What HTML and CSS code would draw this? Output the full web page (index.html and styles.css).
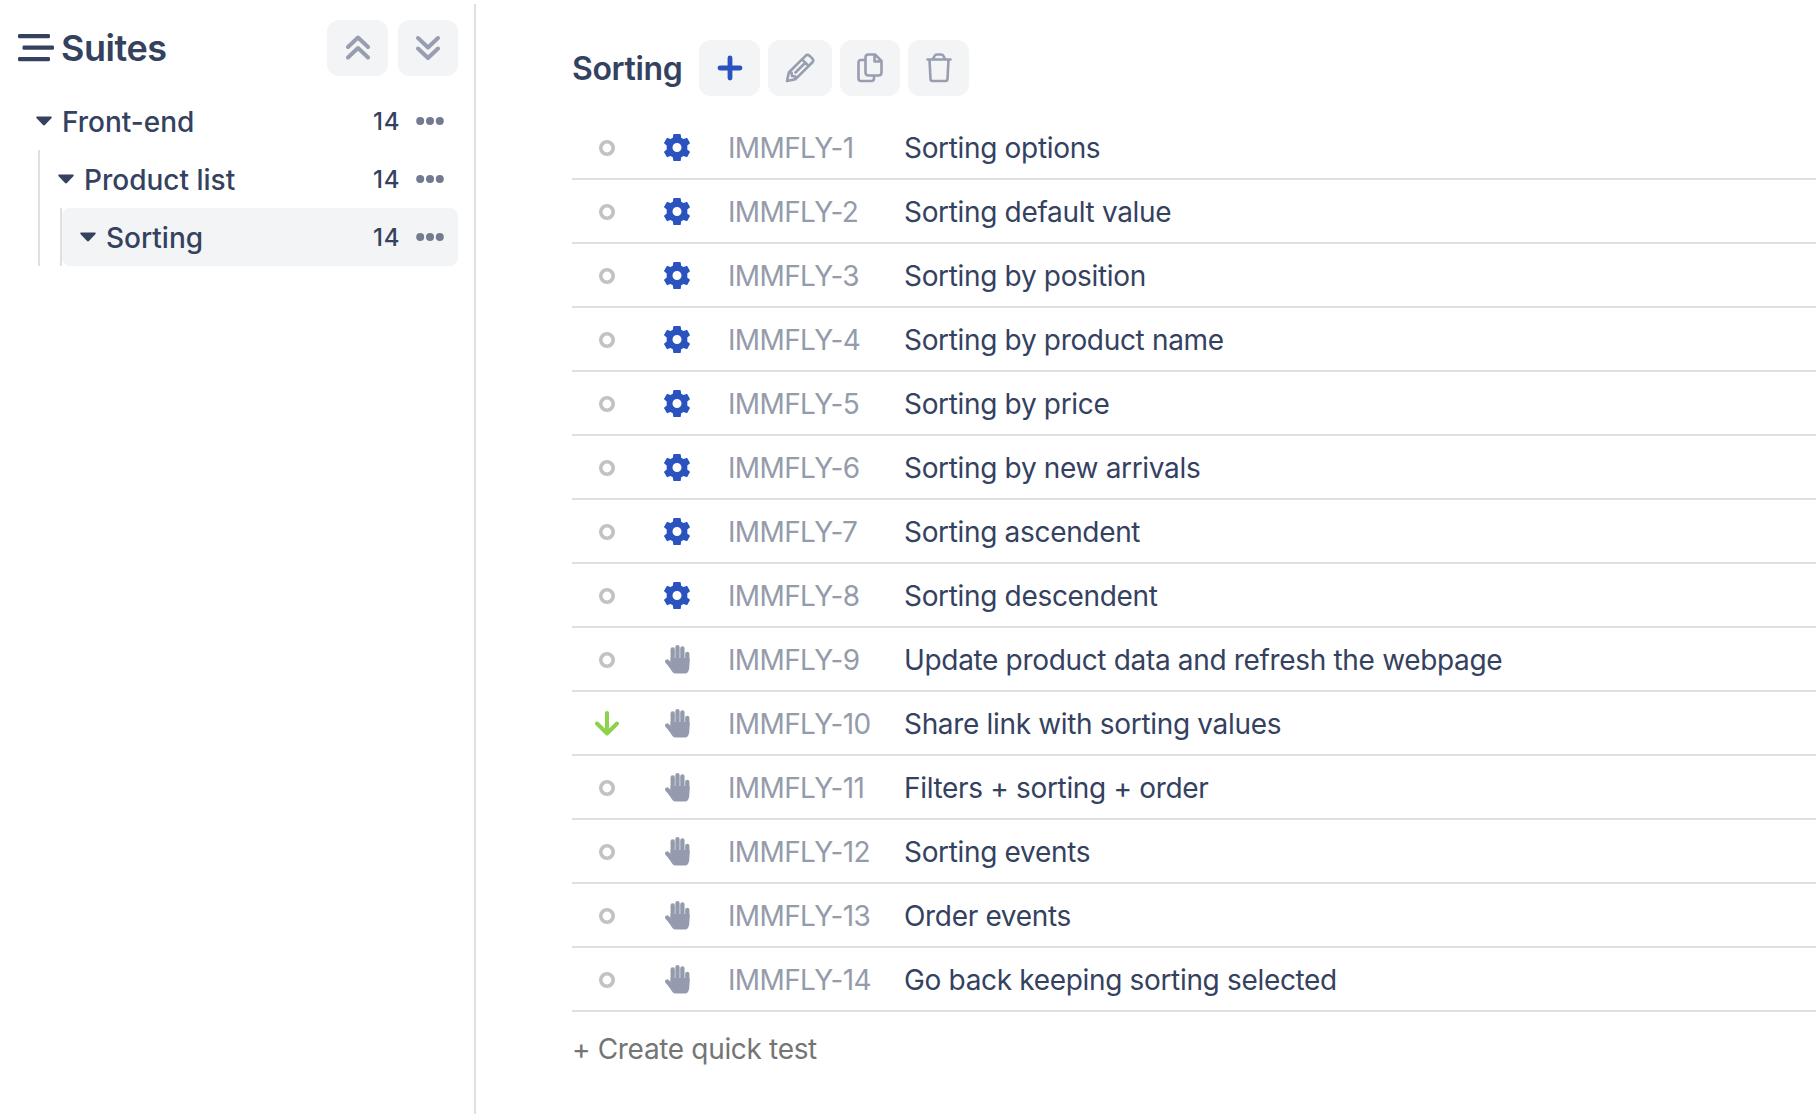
FILE: index.html
```html
<!DOCTYPE html>
<html lang="en">
<head>
<meta charset="utf-8">
<title>Suites</title>
<link rel="stylesheet" href="styles.css">
</head>
<body>
<svg class="sprite" aria-hidden="true">
  <symbol id="caret" viewBox="0 0 16 10"><path d="M1 0.5H15Q16.3 1 15.3 2.2L9.2 8.8Q8 10 6.800 8.800L0.700 2.200Q-0.300 1 1 0.500Z" fill="currentColor"/></symbol>
  <symbol id="dots" viewBox="0 0 28 8"><circle cx="4.200" cy="4" r="4"/><circle cx="14" cy="4" r="4"/><circle cx="23.800" cy="4" r="4"/></symbol>
  <symbol id="ring" viewBox="0 0 16 16"><circle cx="8" cy="8" r="6.200" fill="none" stroke="#c2c2c2" stroke-width="3.600"/></symbol>
  <symbol id="down" viewBox="0 0 24 25"><path d="M12 2V22M2 12.500L12 22.500L22 12.500" fill="none" stroke="#8fd14a" stroke-width="4" stroke-linecap="round" stroke-linejoin="round"/></symbol>
  <symbol id="gear" viewBox="0 0 26 27"><path fill-rule="evenodd" d="M10 0H16Q16.600 0 16.700 .600L17.200 3.700L19.500 5L22.400 3.900Q23 3.700 23.300 4.200L25.900 8.700Q26.100 9.200 25.700 9.600L23.300 11.600V15.400L25.700 17.400Q26.100 17.800 25.900 18.300L23.300 22.800Q23 23.300 22.400 23.100L19.500 22L17.200 23.300L16.700 26.400Q16.600 27 16 27H10Q9.400 27 9.300 26.400L8.800 23.300L6.500 22L3.600 23.100Q3 23.300 2.700 22.800L.1 18.300Q-.1 17.800 .3 17.400L2.700 15.400V11.600L.3 9.600Q-.1 9.200 .1 8.700L2.700 4.200Q3 3.700 3.600 3.900L6.500 5L8.800 3.700L9.300 .6Q9.400 0 10 0ZM13 9A4.500 4.500 0 1 0 13 18A4.500 4.500 0 1 0 13 9Z" fill="#2b53c0"/></symbol>
  <symbol id="hand" viewBox="0 0 25 29"><path d="M7.700 4.500V16M12.500 2.200V16M17.400 3.500V16M22.300 8.800V17M2.200 16.500L9.500 24" fill="none" stroke="currentColor" stroke-width="4.300" stroke-linecap="round"/><path d="M5.600 13H24.500V19Q24.500 24 23 27Q22 28.500 20 28.500H10.500Q8.700 28.500 7.500 27L2 19L5.600 18.500Z" fill="currentColor"/></symbol>
</svg>
<div class="app">
  <aside class="sidebar">
    <header class="side-head">
      <svg class="menu" width="36" height="28" viewBox="0 0 36 28" fill="currentColor"><rect x="0" y="0" width="32" height="4.300" rx="1.400"/><rect x="4.500" y="11.500" width="31.500" height="4.300" rx="1.400"/><rect x="0" y="23" width="32" height="4.300" rx="1.400"/></svg>
      <h1>Suites</h1>
      <button class="btn w61 first"><svg width="26" height="26" viewBox="0 0 26 26"><path d="M3 12L13 2.500L23 12M3 22.500L13 13L23 22.500"/></svg></button>
      <button class="btn w60"><svg width="26" height="26" viewBox="0 0 26 26"><path d="M3 3L13 12.500L23 3M3 13.500L13 23L23 13.500"/></svg></button>
    </header>
    <nav class="tree">
      <div class="node"><svg class="caret"><use href="#caret"/></svg><span class="label">Front-end</span><span class="count">14</span><svg class="dots"><use href="#dots"/></svg></div>
      <div class="branch">
        <div class="node"><svg class="caret"><use href="#caret"/></svg><span class="label">Product list</span><span class="count">14</span><svg class="dots"><use href="#dots"/></svg></div>
        <div class="branch">
          <div class="node active"><svg class="caret"><use href="#caret"/></svg><span class="label">Sorting</span><span class="count">14</span><svg class="dots"><use href="#dots"/></svg></div>
        </div>
      </div>
    </nav>
  </aside>
  <main class="content">
    <header class="main-head">
      <h2>Sorting</h2>
      <button class="btn w61 add"><svg width="26" height="26" viewBox="0 0 26 26"><path d="M13 3V23M3 13H23"/></svg></button>
      <button class="btn w64 thin"><svg width="30" height="30" viewBox="0 0 30 30"><path d="M2 28L3.800 19.500L20.500 2.800Q22.500 .8 24.600 2.800L27.200 5.400Q29.200 7.500 27.200 9.500L10.500 26.200ZM17 6.300L23.700 13M3.800 19.500L6.500 19.500L7 23L10.500 23.500V26.200M10.500 19.500L20 10"/></svg></button>
      <button class="btn w60 thin"><svg width="26" height="30" viewBox="0 0 26 30"><path d="M8 7H4Q1.500 7 1.500 9.500V25.500Q1.500 28 4 28H14.500Q17 28 17 25.500V23M11.500 1.500H18L24.500 8V19.500Q24.500 22.500 21.500 22.500H11.500Q8.500 22.500 8.500 19.500V4.500Q8.500 1.500 11.500 1.500ZM17.500 2V8.500H24"/></svg></button>
      <button class="btn w61 thin"><svg width="26" height="30" viewBox="0 0 26 30"><path d="M1.500 6.500H24.500M3.500 6.500L4.500 26Q4.600 28 6.500 28H19.500Q21.400 28 21.500 26L22.500 6.500M7 6L8.500 3Q9.200 1.500 11 1.500H15Q16.800 1.500 17.500 3L19 6"/></svg></button>
    </header>
    <div class="tests">
      <div class="row"><svg class="ring"><use href="#ring"/></svg><svg class="kind"><use href="#gear"/></svg><span class="id">IMMFLY-1</span><span>Sorting options</span></div>
      <div class="row"><svg class="ring"><use href="#ring"/></svg><svg class="kind"><use href="#gear"/></svg><span class="id">IMMFLY-2</span><span>Sorting default value</span></div>
      <div class="row"><svg class="ring"><use href="#ring"/></svg><svg class="kind"><use href="#gear"/></svg><span class="id">IMMFLY-3</span><span>Sorting by position</span></div>
      <div class="row"><svg class="ring"><use href="#ring"/></svg><svg class="kind"><use href="#gear"/></svg><span class="id">IMMFLY-4</span><span>Sorting by product name</span></div>
      <div class="row"><svg class="ring"><use href="#ring"/></svg><svg class="kind"><use href="#gear"/></svg><span class="id">IMMFLY-5</span><span>Sorting by price</span></div>
      <div class="row"><svg class="ring"><use href="#ring"/></svg><svg class="kind"><use href="#gear"/></svg><span class="id">IMMFLY-6</span><span>Sorting by new arrivals</span></div>
      <div class="row"><svg class="ring"><use href="#ring"/></svg><svg class="kind"><use href="#gear"/></svg><span class="id">IMMFLY-7</span><span>Sorting ascendent</span></div>
      <div class="row"><svg class="ring"><use href="#ring"/></svg><svg class="kind"><use href="#gear"/></svg><span class="id">IMMFLY-8</span><span>Sorting descendent</span></div>
      <div class="row"><svg class="ring"><use href="#ring"/></svg><svg class="kind hand"><use href="#hand"/></svg><span class="id">IMMFLY-9</span><span>Update product data and refresh the webpage</span></div>
      <div class="row"><svg class="down"><use href="#down"/></svg><svg class="kind hand"><use href="#hand"/></svg><span class="id">IMMFLY-10</span><span>Share link with sorting values</span></div>
      <div class="row"><svg class="ring"><use href="#ring"/></svg><svg class="kind hand"><use href="#hand"/></svg><span class="id">IMMFLY-11</span><span>Filters + sorting + order</span></div>
      <div class="row"><svg class="ring"><use href="#ring"/></svg><svg class="kind hand"><use href="#hand"/></svg><span class="id">IMMFLY-12</span><span>Sorting events</span></div>
      <div class="row"><svg class="ring"><use href="#ring"/></svg><svg class="kind hand"><use href="#hand"/></svg><span class="id">IMMFLY-13</span><span>Order events</span></div>
      <div class="row"><svg class="ring"><use href="#ring"/></svg><svg class="kind hand"><use href="#hand"/></svg><span class="id">IMMFLY-14</span><span>Go back keeping sorting selected</span></div>
    </div>
    <div class="quick">+ Create quick test</div>
  </main>
</div>
</body>
</html>
```
FILE: styles.css
```css
* { box-sizing: border-box; }
body { margin: 0; background: #fff; color: #34415f; font: 400 28px/40px Inter, sans-serif; }
svg { display: block; flex: none; }
.sprite { width: 0; height: 0; overflow: hidden; float: left; }
.app { display: flex; height: 1114px; padding-top: 4px; overflow: hidden; white-space: nowrap; }
.sidebar { width: 476px; flex: none; border-right: 2px solid #dfe0e3; padding: 16px 16px 0 18px; }
.side-head { display: flex; align-items: center; height: 56px; }
.menu { margin-right: 7px; margin-top: -1px; }
h1, h2 { margin: 0; font-weight: 600; }
h1 { font-size: 36px; letter-spacing: -0.45px; }
.btn { height: 56px; border: 0; padding: 0; border-radius: 12px; background: #f3f4f6; display: flex; align-items: center; justify-content: center; flex: none; }
.btn svg { fill: none; stroke: #989eb0; stroke-width: 4; stroke-linecap: round; stroke-linejoin: round; }
.btn.thin svg { stroke-width: 2.6; }
.btn.add svg { stroke: #2b53c0; stroke-width: 4.8; }
.w60 { width: 60px; }
.w61 { width: 61px; }
.w64 { width: 64px; }
.first { margin-left: auto; margin-right: 10px; }
.tree { margin-top: 16px; }
.node { display: flex; align-items: center; height: 58px; padding: 0 14px 0 18px; border-radius: 8px; font-weight: 500; }
.branch { margin-left: 20px; border-left: 2px solid #dfe0e3; }
.active { background: #f3f4f6; }
.caret { width: 16px; height: 10px; margin-right: 10px; }
.label { flex: 1; padding-top: 1px; }
.count { font-size: 24px; letter-spacing: 0.6px; margin-right: 16px; padding-top: 2px; }
.dots { width: 28px; height: 8px; fill: #737b90; }
.content { flex: 1; padding: 36px 0 0 96px; min-width: 0; }
.main-head { display: flex; align-items: center; gap: 8px; height: 56px; }
h2 { font-size: 32px; width: 119px; letter-spacing: -0.35px; padding-top: 2px; }
.tests { margin-top: 20px; }
.row { display: grid; grid-template-columns: 70px 70px 192px 1fr; align-items: center; height: 64px; padding-top: 1px; border-bottom: 2px solid #dfe0e5; letter-spacing: -0.33px; }
.ring, .down, .kind { justify-self: center; }
.ring { width: 16px; height: 16px; }
.down { width: 24px; height: 25px; }
.kind { width: 26px; height: 27px; }
.hand { width: 25px; height: 29px; color: #949bae; }
.id { color: #949bab; padding-left: 16px; letter-spacing: -0.65px; }
.quick { color: #757575; margin-top: 17px; letter-spacing: -0.33px; }
```
